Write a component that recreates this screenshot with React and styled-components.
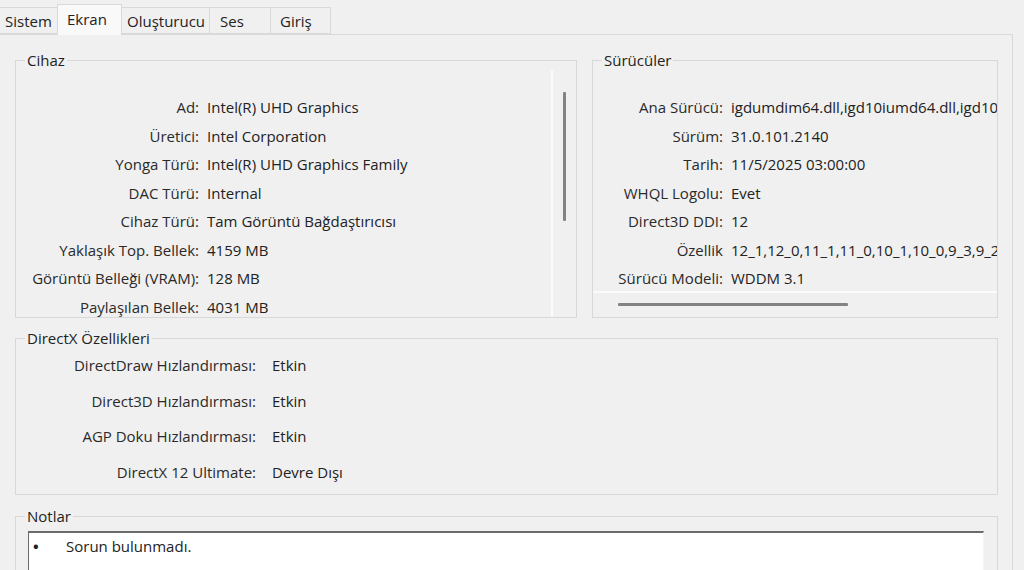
import React from "react";
import styled, { createGlobalStyle } from "styled-components";

const Global = createGlobalStyle`
  html, body { margin: 0; padding: 0; background: #f0f0f0; }
  body { font-family: "Open Sans", "Noto Sans", sans-serif; color: #222; }
  * { box-sizing: border-box; }
`;

const Root = styled.div`
  width: 1024px;
  height: 570px;
  overflow: hidden;
  background: #f0f0f0;
  display: flex;
  flex-direction: column;
  font-size: 15px;
`;

const TabStrip = styled.div`
  flex: none;
  display: flex;
  align-items: flex-end;
  height: 34px;
  margin-left: -1px;
  position: relative;
  z-index: 1;
`;

const Tab = styled.div`
  width: ${(p) => p.$w}px;
  height: ${(p) => (p.$active ? 31 : 27)}px;
  margin-right: -1px;
  margin-bottom: ${(p) => (p.$active ? -1 : 0)}px;
  padding-left: ${(p) => p.$inset}px;
  border: 1px solid #d9d9d9;
  border-bottom: ${(p) => (p.$active ? "none" : "1px solid #d9d9d9")};
  background: ${(p) => (p.$active ? "#f9f9f9" : "#f0f0f0")};
  line-height: ${(p) => (p.$active ? 28 : 26)}px;
  white-space: nowrap;
  color: #222;
  position: relative;
  z-index: ${(p) => (p.$active ? 2 : 1)};
`;

const Panel = styled.div`
  flex: none;
  width: 1013px;
  height: 540px;
  border-top: 1px solid #d9d9d9;
  border-right: 1px solid #d9d9d9;
  padding: 15px 14px 0 15px;
  display: flex;
  flex-direction: column;
`;

const TopRow = styled.div`
  flex: none;
  display: flex;
  gap: 15px;
  height: 268px;
`;

const Group = styled.fieldset`
  flex: none;
  margin: ${(p) => p.$mt || 0}px 0 0 0;
  padding: 0;
  border: 1px solid #d8d8d8;
  min-width: 0;
  width: ${(p) => (p.$w ? `${p.$w}px` : "auto")};
  height: ${(p) => (p.$h ? `${p.$h}px` : "auto")};
  display: flex;
  flex-direction: column;
  overflow: hidden;
`;

const Legend = styled.legend`
  margin-left: 9px;
  padding: 0 2px;
  line-height: 20px;
  font-size: 15px;
  color: #222;
`;

const HBody = styled.div`
  flex: 1;
  display: flex;
  min-height: 0;
`;

const VBody = styled.div`
  flex: 1;
  display: flex;
  flex-direction: column;
  min-height: 0;
`;

const InfoGrid = styled.div`
  flex: 1;
  min-width: 0;
  min-height: 0;
  overflow: hidden;
  display: grid;
  grid-template-columns: ${(p) => p.$label}px 1fr;
  grid-auto-rows: ${(p) => p.$row}px;
  column-gap: ${(p) => p.$gap}px;
  align-content: start;
  padding-top: ${(p) => p.$top}px;
`;

const Label = styled.div`
  text-align: right;
  white-space: nowrap;
  line-height: ${(p) => p.$row}px;
  color: #2a2a2a;
`;

const Value = styled.div`
  white-space: nowrap;
  overflow: hidden;
  line-height: ${(p) => p.$row}px;
  color: #222;
`;

const VTrack = styled.div`
  width: 25px;
  border-left: 2px solid #fbfbfb;
  padding: 22px 0 0 10px;
`;

const VThumb = styled.div`
  width: 3px;
  height: 129px;
  background: #838383;
  border-radius: 1px;
`;

const HTrack = styled.div`
  flex: none;
  height: 26px;
  border-top: 2px solid #fbfbfb;
  padding: 10px 0 0 25px;
`;

const HThumb = styled.div`
  width: 230px;
  height: 3px;
  background: #838383;
  border-radius: 1px;
`;

const NoteBox = styled.div`
  margin: 5px 13px 0 12px;
  height: 60px;
  background: #fff;
  border-top: 2px solid #6b6b6b;
  border-left: 1px solid #6b6b6b;
  border-right: 1px solid #f4f4f4;
  padding-left: 4px;
`;

const NoteLine = styled.div`
  display: flex;
  line-height: 26px;
  color: #222;
`;

const Bullet = styled.span`
  width: 33px;
  font-weight: 700;
`;

const tabs = [
  { t: "Sistem", w: 59, inset: 5 },
  { t: "Ekran", w: 65, inset: 9, active: true },
  { t: "Oluşturucu", w: 89, inset: 5 },
  { t: "Ses", w: 62, inset: 10 },
  { t: "Giriş", w: 61, inset: 9 },
];

const device = [
  ["Ad:", "Intel(R) UHD Graphics"],
  ["Üretici:", "Intel Corporation"],
  ["Yonga Türü:", "Intel(R) UHD Graphics Family"],
  ["DAC Türü:", "Internal"],
  ["Cihaz Türü:", "Tam Görüntü Bağdaştırıcısı"],
  ["Yaklaşık Top. Bellek:", "4159 MB"],
  ["Görüntü Belleği (VRAM):", "128 MB"],
  ["Paylaşılan Bellek:", "4031 MB"],
];

const drivers = [
  ["Ana Sürücü:", "igdumdim64.dll,igd10iumd64.dll,igd10iumd64.dll,igd12umd64.dll"],
  ["Sürüm:", "31.0.101.2140"],
  ["Tarih:", "11/5/2025 03:00:00"],
  ["WHQL Logolu:", "Evet"],
  ["Direct3D DDI:", "12"],
  ["Özellik", "12_1,12_0,11_1,11_0,10_1,10_0,9_3,9_2,9_1"],
  ["Sürücü Modeli:", "WDDM 3.1"],
];

const dx = [
  ["DirectDraw Hızlandırması:", "Etkin"],
  ["Direct3D Hızlandırması:", "Etkin"],
  ["AGP Doku Hızlandırması:", "Etkin"],
  ["DirectX 12 Ultimate:", "Devre Dışı"],
];

function Rows({ data, row }) {
  return data.map(([l, v]) => (
    <React.Fragment key={l}>
      <Label $row={row}>{l}</Label>
      <Value $row={row}>{v}</Value>
    </React.Fragment>
  ));
}

export default function App() {
  return (
    <Root>
      <Global />
      <TabStrip>
        {tabs.map((t) => (
          <Tab key={t.t} $w={t.w} $inset={t.inset} $active={t.active}>
            {t.t}
          </Tab>
        ))}
      </TabStrip>
      <Panel>
        <TopRow>
          <Group $w={562}>
            <Legend>Cihaz</Legend>
            <HBody>
              <InfoGrid $label={183} $gap={8} $row={28.5} $top={23}>
                <Rows data={device} row={28.5} />
              </InfoGrid>
              <VTrack>
                <VThumb />
              </VTrack>
            </HBody>
          </Group>
          <Group $w={406}>
            <Legend>Sürücüler</Legend>
            <VBody>
              <InfoGrid $label={130} $gap={8} $row={28.5} $top={23}>
                <Rows data={drivers} row={28.5} />
              </InfoGrid>
              <HTrack>
                <HThumb />
              </HTrack>
            </VBody>
          </Group>
        </TopRow>
        <Group $mt={10} $h={167}>
          <Legend>DirectX Özellikleri</Legend>
          <InfoGrid $label={240} $gap={16} $row={35.7} $top={0}>
            <Rows data={dx} row={35.7} />
          </InfoGrid>
        </Group>
        <Group $mt={11} $h={120}>
          <Legend>Notlar</Legend>
          <NoteBox>
            <NoteLine>
              <Bullet>•</Bullet>
              <span>Sorun bulunmadı.</span>
            </NoteLine>
          </NoteBox>
        </Group>
      </Panel>
    </Root>
  );
}
